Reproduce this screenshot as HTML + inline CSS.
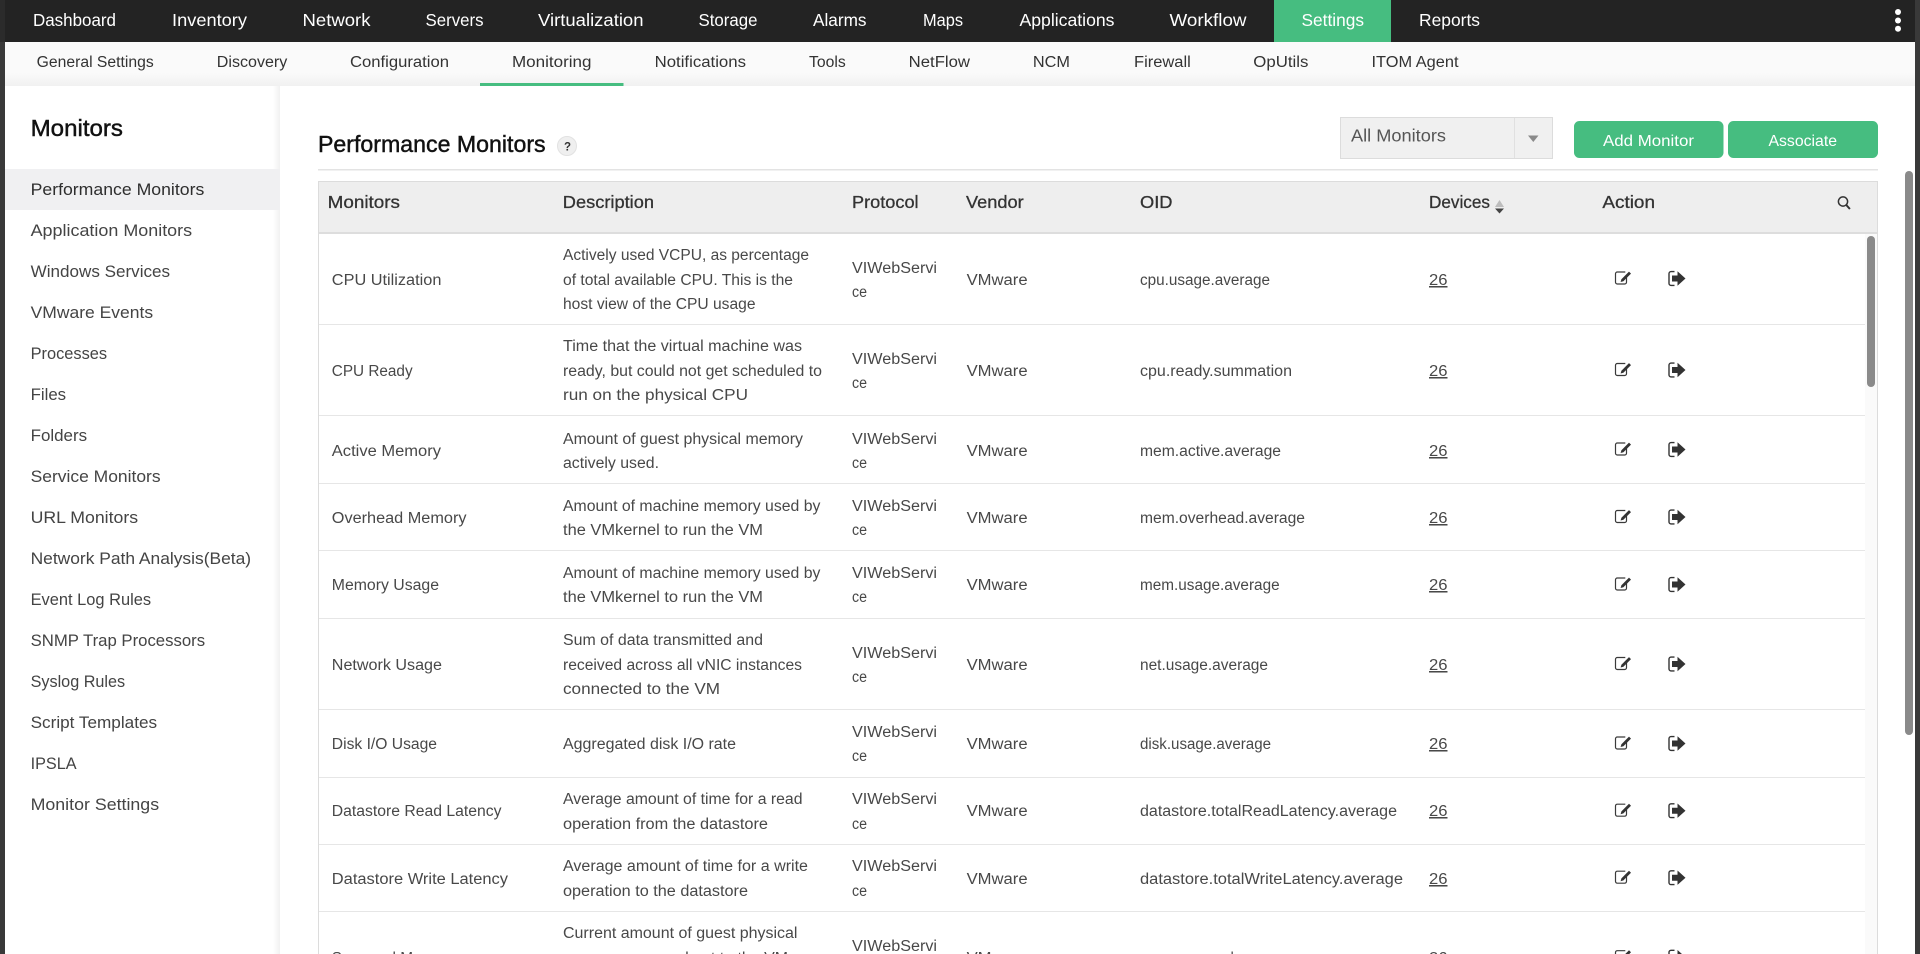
<!DOCTYPE html>
<html lang="en">
<head>
<meta charset="utf-8">
<title>Performance Monitors</title>
<style>
html,body{margin:0;padding:0;width:1920px;height:954px;overflow:hidden;background:#fff}
svg{display:block}
text{font-family:"Liberation Sans",sans-serif}
.n{font-size:17.5px;fill:#fff}
.s{font-size:15.5px;fill:#333}
.m{font-size:16.5px;fill:#444}
.h{font-size:17.5px;fill:#333;stroke:#333;stroke-width:.3px}
.t{font-size:23.5px;fill:#111;stroke:#111;stroke-width:.45px}
.c{font-size:15.3px;fill:#484848}
.u{text-decoration:underline}
</style>
</head>
<body>
<svg width="1920" height="954" viewBox="0 0 1920 954" xmlns="http://www.w3.org/2000/svg">
<defs>
<linearGradient id="sg" x1="0" y1="0" x2="0" y2="1"><stop offset="0" stop-color="#fafafa"/><stop offset=".7" stop-color="#fafafa"/><stop offset="1" stop-color="#f1f1f1"/></linearGradient>
<linearGradient id="sh" x1="0" y1="0" x2="1" y2="0"><stop offset="0" stop-color="#fff"/><stop offset="1" stop-color="#f1f1f1"/></linearGradient>
<g id="act">
<path d="M1626.5 277v5.2a1.8 1.8 0 0 1-1.8 1.8h-7.4a1.8 1.8 0 0 1-1.8-1.8v-8.4a1.8 1.8 0 0 1 1.8-1.8h8" fill="none" stroke="#3a3a3a" stroke-width="1.2"/>
<path d="M1629 271.6l2 2-7.6 7.6-2.8.8.8-2.8z" fill="#333"/>
<path d="M1674.5 271.6h-3.5a2 2 0 0 0-2 2v9.8a2 2 0 0 0 2 2h3.5" fill="none" stroke="#333" stroke-width="1.4"/>
<path d="M1672 275.5h5.5v-4.2l8 7.2-8 7.2v-4.2h-5.5z" fill="#333"/>
</g>
</defs>

<!-- frame -->
<rect width="1920" height="954" fill="#fff"/>
<rect x="0" y="0" width="5" height="954" fill="#393939"/>
<rect x="1915" y="0" width="5" height="954" fill="#393939"/>

<!-- top nav -->
<rect x="0" y="0" width="1920" height="42" fill="#232323"/>
<rect x="0" y="0" width="5" height="42" fill="#2b2b2b"/>
<rect x="1915" y="0" width="5" height="42" fill="#393939"/>
<rect x="1274" y="0" width="117" height="42" fill="#46bd80"/>
<text class="n" x="33" y="26" textLength="83" lengthAdjust="spacingAndGlyphs">Dashboard</text>
<text class="n" x="172" y="26" textLength="75" lengthAdjust="spacingAndGlyphs">Inventory</text>
<text class="n" x="302.5" y="26" textLength="68" lengthAdjust="spacingAndGlyphs">Network</text>
<text class="n" x="425.5" y="26" textLength="58" lengthAdjust="spacingAndGlyphs">Servers</text>
<text class="n" x="538" y="26" textLength="105.5" lengthAdjust="spacingAndGlyphs">Virtualization</text>
<text class="n" x="698.5" y="26" textLength="59" lengthAdjust="spacingAndGlyphs">Storage</text>
<text class="n" x="813" y="26" textLength="53.5" lengthAdjust="spacingAndGlyphs">Alarms</text>
<text class="n" x="923" y="26" textLength="40" lengthAdjust="spacingAndGlyphs">Maps</text>
<text class="n" x="1019.5" y="26" textLength="95" lengthAdjust="spacingAndGlyphs">Applications</text>
<text class="n" x="1169.5" y="26" textLength="77" lengthAdjust="spacingAndGlyphs">Workflow</text>
<text class="n" x="1301.5" y="26" textLength="62.5" lengthAdjust="spacingAndGlyphs">Settings</text>
<text class="n" x="1419" y="26" textLength="61" lengthAdjust="spacingAndGlyphs">Reports</text>
<circle cx="1898" cy="12" r="3" fill="#fff"/><circle cx="1898" cy="20.5" r="3" fill="#fff"/><circle cx="1898" cy="28.7" r="3" fill="#fff"/>

<!-- sub nav -->
<rect x="5" y="42" width="1910" height="44" fill="url(#sg)"/>
<rect x="480" y="83" width="143.5" height="3" fill="#46bd80"/>
<text class="s" x="36.7" y="67" textLength="117" lengthAdjust="spacingAndGlyphs">General Settings</text>
<text class="s" x="216.8" y="67" textLength="70.5" lengthAdjust="spacingAndGlyphs">Discovery</text>
<text class="s" x="350" y="67" textLength="99" lengthAdjust="spacingAndGlyphs">Configuration</text>
<text class="s" x="512" y="67" textLength="79.5" lengthAdjust="spacingAndGlyphs">Monitoring</text>
<text class="s" x="654.6" y="67" textLength="91.4" lengthAdjust="spacingAndGlyphs">Notifications</text>
<text class="s" x="809" y="67" textLength="36.7" lengthAdjust="spacingAndGlyphs">Tools</text>
<text class="s" x="908.7" y="67" textLength="61.3" lengthAdjust="spacingAndGlyphs">NetFlow</text>
<text class="s" x="1032.9" y="67" textLength="37.1" lengthAdjust="spacingAndGlyphs">NCM</text>
<text class="s" x="1134" y="67" textLength="56.8" lengthAdjust="spacingAndGlyphs">Firewall</text>
<text class="s" x="1253.3" y="67" textLength="55.1" lengthAdjust="spacingAndGlyphs">OpUtils</text>
<text class="s" x="1371.5" y="67" textLength="87" lengthAdjust="spacingAndGlyphs">ITOM Agent</text>

<!-- sidebar -->
<rect x="273" y="86" width="7" height="868" fill="url(#sh)"/>
<text class="t" x="30.6" y="136" textLength="92.4" lengthAdjust="spacingAndGlyphs">Monitors</text>
<rect x="5" y="169" width="275" height="41" fill="#f0f0f2"/>
<text class="m" x="30.6" y="195" style="fill:#2e2e2e" textLength="173.7" lengthAdjust="spacingAndGlyphs">Performance Monitors</text>
<text class="m" x="30.6" y="236" textLength="161.5" lengthAdjust="spacingAndGlyphs">Application Monitors</text>
<text class="m" x="30.6" y="277" textLength="139.5" lengthAdjust="spacingAndGlyphs">Windows Services</text>
<text class="m" x="30.6" y="318" textLength="122.5" lengthAdjust="spacingAndGlyphs">VMware Events</text>
<text class="m" x="30.6" y="359" textLength="76.5" lengthAdjust="spacingAndGlyphs">Processes</text>
<text class="m" x="30.6" y="400" textLength="35.5" lengthAdjust="spacingAndGlyphs">Files</text>
<text class="m" x="30.6" y="441" textLength="56.5" lengthAdjust="spacingAndGlyphs">Folders</text>
<text class="m" x="30.6" y="482" textLength="130" lengthAdjust="spacingAndGlyphs">Service Monitors</text>
<text class="m" x="30.6" y="523" textLength="107.5" lengthAdjust="spacingAndGlyphs">URL Monitors</text>
<text class="m" x="30.6" y="564" textLength="220.5" lengthAdjust="spacingAndGlyphs">Network Path Analysis(Beta)</text>
<text class="m" x="30.6" y="605" textLength="120.5" lengthAdjust="spacingAndGlyphs">Event Log Rules</text>
<text class="m" x="30.6" y="646" textLength="174.5" lengthAdjust="spacingAndGlyphs">SNMP Trap Processors</text>
<text class="m" x="30.6" y="687" textLength="94.5" lengthAdjust="spacingAndGlyphs">Syslog Rules</text>
<text class="m" x="30.6" y="728" textLength="126.5" lengthAdjust="spacingAndGlyphs">Script Templates</text>
<text class="m" x="30.6" y="769" textLength="46" lengthAdjust="spacingAndGlyphs">IPSLA</text>
<text class="m" x="30.6" y="810" textLength="128.5" lengthAdjust="spacingAndGlyphs">Monitor Settings</text>

<!-- heading -->
<text class="t" x="318" y="152" textLength="227.6" lengthAdjust="spacingAndGlyphs">Performance Monitors</text>
<circle cx="567" cy="146" r="9.5" fill="#efefef" stroke="#e2e2e2"/>
<text x="564" y="150.5" font-size="11.5" font-weight="bold" fill="#333">?</text>
<rect x="318" y="169" width="1560" height="1.5" fill="#e3e3e3"/>

<!-- dropdown -->
<rect x="1340.5" y="117.5" width="212" height="41" fill="#f0f0f0" stroke="#dcdcdc"/>
<rect x="1514" y="118" width="1" height="40" fill="#e0e0e0"/>
<path d="M1528 135.5h10.5l-5.2 6.5z" fill="#8a8a8a"/>
<text x="1351" y="141.5" font-size="17.5" fill="#555" textLength="95" lengthAdjust="spacingAndGlyphs">All Monitors</text>

<!-- buttons -->
<rect x="1574" y="121" width="149.5" height="37" rx="5.5" fill="#46bd80"/>
<rect x="1728" y="121" width="150" height="37" rx="5.5" fill="#46bd80"/>
<text x="1603" y="146" font-size="16" fill="#fff" textLength="91" lengthAdjust="spacingAndGlyphs">Add Monitor</text>
<text x="1768.5" y="146" font-size="16" fill="#fff" textLength="68.5" lengthAdjust="spacingAndGlyphs">Associate</text>

<!-- table chrome -->
<rect x="318.5" y="181.5" width="1559" height="790" fill="#fff" stroke="#dcdcdc"/>
<rect x="319" y="182" width="1558" height="50" fill="#eee"/>
<rect x="319" y="232" width="1558" height="2" fill="#ddd"/>
<rect x="1865" y="234" width="12" height="720" fill="#fafafa"/>
<rect x="1867" y="236" width="8" height="151" rx="4" fill="#8a8a8a"/>

<!-- outer scrollbar -->
<rect x="1905" y="171" width="8" height="564" rx="4" fill="#8a8a8a"/>

<!-- table head -->
<text class="h" x="327.6" y="208" textLength="72.4" lengthAdjust="spacingAndGlyphs">Monitors</text>
<text class="h" x="562.8" y="208" textLength="91.2" lengthAdjust="spacingAndGlyphs">Description</text>
<text class="h" x="852" y="208" textLength="66.6" lengthAdjust="spacingAndGlyphs">Protocol</text>
<text class="h" x="966" y="208" textLength="57.7" lengthAdjust="spacingAndGlyphs">Vendor</text>
<text class="h" x="1140" y="208" textLength="32.5" lengthAdjust="spacingAndGlyphs">OID</text>
<text class="h" x="1429" y="208" textLength="61" lengthAdjust="spacingAndGlyphs">Devices</text>
<text class="h" x="1602.4" y="208" textLength="52.6" lengthAdjust="spacingAndGlyphs">Action</text>
<path d="M1495 207l4.5-7 4.5 7z" fill="#bdbdbd"/>
<path d="M1495 208.5h9l-4.5 5z" fill="#444"/>
<circle cx="1843" cy="201.5" r="4.6" fill="none" stroke="#333" stroke-width="1.5"/>
<path d="M1846.3 205l3.6 4" stroke="#333" stroke-width="2" fill="none"/>

<!-- row separators -->
<g fill="#e6e6e6">
<rect x="319" y="324" width="1546" height="1"/>
<rect x="319" y="415" width="1546" height="1"/>
<rect x="319" y="483" width="1546" height="1"/>
<rect x="319" y="550" width="1546" height="1"/>
<rect x="319" y="618" width="1546" height="1"/>
<rect x="319" y="709" width="1546" height="1"/>
<rect x="319" y="777" width="1546" height="1"/>
<rect x="319" y="844" width="1546" height="1"/>
<rect x="319" y="911" width="1546" height="1"/>
</g>

<!-- row 1 -->
<text class="c" x="331.8" y="285" textLength="109.6" lengthAdjust="spacingAndGlyphs">CPU Utilization</text>
<text class="c" x="563" y="260" textLength="246" lengthAdjust="spacingAndGlyphs">Actively used VCPU, as percentage</text>
<text class="c" x="563" y="285" textLength="230" lengthAdjust="spacingAndGlyphs">of total available CPU. This is the</text>
<text class="c" x="563" y="309" textLength="192.5" lengthAdjust="spacingAndGlyphs">host view of the CPU usage</text>
<text class="c" x="852" y="273" textLength="85" lengthAdjust="spacingAndGlyphs">VIWebServi</text>
<text class="c" x="852" y="297" textLength="15" lengthAdjust="spacingAndGlyphs">ce</text>
<text class="c" x="966.6" y="285" textLength="61" lengthAdjust="spacingAndGlyphs">VMware</text>
<text class="c" x="1140" y="285" textLength="130" lengthAdjust="spacingAndGlyphs">cpu.usage.average</text>
<text class="c u" x="1429" y="285" textLength="18.5" lengthAdjust="spacingAndGlyphs">26</text>
<use href="#act"/>

<!-- row 2 -->
<text class="c" x="331.8" y="376" textLength="80.8" lengthAdjust="spacingAndGlyphs">CPU Ready</text>
<text class="c" x="563" y="351" textLength="239" lengthAdjust="spacingAndGlyphs">Time that the virtual machine was</text>
<text class="c" x="563" y="376" textLength="259" lengthAdjust="spacingAndGlyphs">ready, but could not get scheduled to</text>
<text class="c" x="563" y="400" textLength="185" lengthAdjust="spacingAndGlyphs">run on the physical CPU</text>
<text class="c" x="852" y="364" textLength="85" lengthAdjust="spacingAndGlyphs">VIWebServi</text>
<text class="c" x="852" y="388" textLength="15" lengthAdjust="spacingAndGlyphs">ce</text>
<text class="c" x="966.6" y="376" textLength="61" lengthAdjust="spacingAndGlyphs">VMware</text>
<text class="c" x="1140" y="376" textLength="152" lengthAdjust="spacingAndGlyphs">cpu.ready.summation</text>
<text class="c u" x="1429" y="376" textLength="18.5" lengthAdjust="spacingAndGlyphs">26</text>
<use href="#act" y="91.5"/>

<!-- row 3 -->
<text class="c" x="331.8" y="456" textLength="109.2" lengthAdjust="spacingAndGlyphs">Active Memory</text>
<text class="c" x="563" y="444" textLength="240" lengthAdjust="spacingAndGlyphs">Amount of guest physical memory</text>
<text class="c" x="563" y="468" textLength="96" lengthAdjust="spacingAndGlyphs">actively used.</text>
<text class="c" x="852" y="444" textLength="85" lengthAdjust="spacingAndGlyphs">VIWebServi</text>
<text class="c" x="852" y="468" textLength="15" lengthAdjust="spacingAndGlyphs">ce</text>
<text class="c" x="966.6" y="456" textLength="61" lengthAdjust="spacingAndGlyphs">VMware</text>
<text class="c" x="1140" y="456" textLength="141" lengthAdjust="spacingAndGlyphs">mem.active.average</text>
<text class="c u" x="1429" y="456" textLength="18.5" lengthAdjust="spacingAndGlyphs">26</text>
<use href="#act" y="171"/>

<!-- row 4 -->
<text class="c" x="331.8" y="523" textLength="134.7" lengthAdjust="spacingAndGlyphs">Overhead Memory</text>
<text class="c" x="563" y="511" textLength="257.4" lengthAdjust="spacingAndGlyphs">Amount of machine memory used by</text>
<text class="c" x="563" y="535" textLength="200" lengthAdjust="spacingAndGlyphs">the VMkernel to run the VM</text>
<text class="c" x="852" y="511" textLength="85" lengthAdjust="spacingAndGlyphs">VIWebServi</text>
<text class="c" x="852" y="535" textLength="15" lengthAdjust="spacingAndGlyphs">ce</text>
<text class="c" x="966.6" y="523" textLength="61" lengthAdjust="spacingAndGlyphs">VMware</text>
<text class="c" x="1140" y="523" textLength="165" lengthAdjust="spacingAndGlyphs">mem.overhead.average</text>
<text class="c u" x="1429" y="523" textLength="18.5" lengthAdjust="spacingAndGlyphs">26</text>
<use href="#act" y="238.5"/>

<!-- row 5 -->
<text class="c" x="331.8" y="590" textLength="107.2" lengthAdjust="spacingAndGlyphs">Memory Usage</text>
<text class="c" x="563" y="578" textLength="257.4" lengthAdjust="spacingAndGlyphs">Amount of machine memory used by</text>
<text class="c" x="563" y="602" textLength="200" lengthAdjust="spacingAndGlyphs">the VMkernel to run the VM</text>
<text class="c" x="852" y="578" textLength="85" lengthAdjust="spacingAndGlyphs">VIWebServi</text>
<text class="c" x="852" y="602" textLength="15" lengthAdjust="spacingAndGlyphs">ce</text>
<text class="c" x="966.6" y="590" textLength="61" lengthAdjust="spacingAndGlyphs">VMware</text>
<text class="c" x="1140" y="590" textLength="139.6" lengthAdjust="spacingAndGlyphs">mem.usage.average</text>
<text class="c u" x="1429" y="590" textLength="18.5" lengthAdjust="spacingAndGlyphs">26</text>
<use href="#act" y="306"/>

<!-- row 6 -->
<text class="c" x="331.8" y="670" textLength="110.2" lengthAdjust="spacingAndGlyphs">Network Usage</text>
<text class="c" x="563" y="645" textLength="200" lengthAdjust="spacingAndGlyphs">Sum of data transmitted and</text>
<text class="c" x="563" y="670" textLength="239" lengthAdjust="spacingAndGlyphs">received across all vNIC instances</text>
<text class="c" x="563" y="694" textLength="157" lengthAdjust="spacingAndGlyphs">connected to the VM</text>
<text class="c" x="852" y="658" textLength="85" lengthAdjust="spacingAndGlyphs">VIWebServi</text>
<text class="c" x="852" y="682" textLength="15" lengthAdjust="spacingAndGlyphs">ce</text>
<text class="c" x="966.6" y="670" textLength="61" lengthAdjust="spacingAndGlyphs">VMware</text>
<text class="c" x="1140" y="670" textLength="128" lengthAdjust="spacingAndGlyphs">net.usage.average</text>
<text class="c u" x="1429" y="670" textLength="18.5" lengthAdjust="spacingAndGlyphs">26</text>
<use href="#act" y="385.5"/>

<!-- row 7 -->
<text class="c" x="331.8" y="749" textLength="105.2" lengthAdjust="spacingAndGlyphs">Disk I/O Usage</text>
<text class="c" x="563" y="749" textLength="173" lengthAdjust="spacingAndGlyphs">Aggregated disk I/O rate</text>
<text class="c" x="852" y="737" textLength="85" lengthAdjust="spacingAndGlyphs">VIWebServi</text>
<text class="c" x="852" y="761" textLength="15" lengthAdjust="spacingAndGlyphs">ce</text>
<text class="c" x="966.6" y="749" textLength="61" lengthAdjust="spacingAndGlyphs">VMware</text>
<text class="c" x="1140" y="749" textLength="131" lengthAdjust="spacingAndGlyphs">disk.usage.average</text>
<text class="c u" x="1429" y="749" textLength="18.5" lengthAdjust="spacingAndGlyphs">26</text>
<use href="#act" y="465"/>

<!-- row 8 -->
<text class="c" x="331.8" y="816" textLength="169.7" lengthAdjust="spacingAndGlyphs">Datastore Read Latency</text>
<text class="c" x="563" y="804" textLength="239.5" lengthAdjust="spacingAndGlyphs">Average amount of time for a read</text>
<text class="c" x="563" y="829" textLength="205" lengthAdjust="spacingAndGlyphs">operation from the datastore</text>
<text class="c" x="852" y="804" textLength="85" lengthAdjust="spacingAndGlyphs">VIWebServi</text>
<text class="c" x="852" y="829" textLength="15" lengthAdjust="spacingAndGlyphs">ce</text>
<text class="c" x="966.6" y="816" textLength="61" lengthAdjust="spacingAndGlyphs">VMware</text>
<text class="c" x="1140" y="816" textLength="257" lengthAdjust="spacingAndGlyphs">datastore.totalReadLatency.average</text>
<text class="c u" x="1429" y="816" textLength="18.5" lengthAdjust="spacingAndGlyphs">26</text>
<use href="#act" y="532.2"/>

<!-- row 9 -->
<text class="c" x="331.8" y="884" textLength="176.2" lengthAdjust="spacingAndGlyphs">Datastore Write Latency</text>
<text class="c" x="563" y="871" textLength="245" lengthAdjust="spacingAndGlyphs">Average amount of time for a write</text>
<text class="c" x="563" y="896" textLength="185" lengthAdjust="spacingAndGlyphs">operation to the datastore</text>
<text class="c" x="852" y="871" textLength="85" lengthAdjust="spacingAndGlyphs">VIWebServi</text>
<text class="c" x="852" y="896" textLength="15" lengthAdjust="spacingAndGlyphs">ce</text>
<text class="c" x="966.6" y="884" textLength="61" lengthAdjust="spacingAndGlyphs">VMware</text>
<text class="c" x="1140" y="884" textLength="263" lengthAdjust="spacingAndGlyphs">datastore.totalWriteLatency.average</text>
<text class="c u" x="1429" y="884" textLength="18.5" lengthAdjust="spacingAndGlyphs">26</text>
<use href="#act" y="599.2"/>

<!-- row 10 -->
<text class="c" x="331.8" y="963" textLength="124" lengthAdjust="spacingAndGlyphs">Swapped Memory</text>
<text class="c" x="563" y="938" textLength="234.5" lengthAdjust="spacingAndGlyphs">Current amount of guest physical</text>
<text class="c" x="563" y="963" textLength="225" lengthAdjust="spacingAndGlyphs">memory swapped out to the VM</text>
<text class="c" x="852" y="951" textLength="85" lengthAdjust="spacingAndGlyphs">VIWebServi</text>
<text class="c" x="966.6" y="963" textLength="61" lengthAdjust="spacingAndGlyphs">VMware</text>
<text class="c" x="1140" y="963" textLength="150" lengthAdjust="spacingAndGlyphs">mem.swapped.average</text>
<text class="c u" x="1429" y="963" textLength="18.5" lengthAdjust="spacingAndGlyphs">26</text>
<use href="#act" y="678.7"/>
</svg>
</body>
</html>
